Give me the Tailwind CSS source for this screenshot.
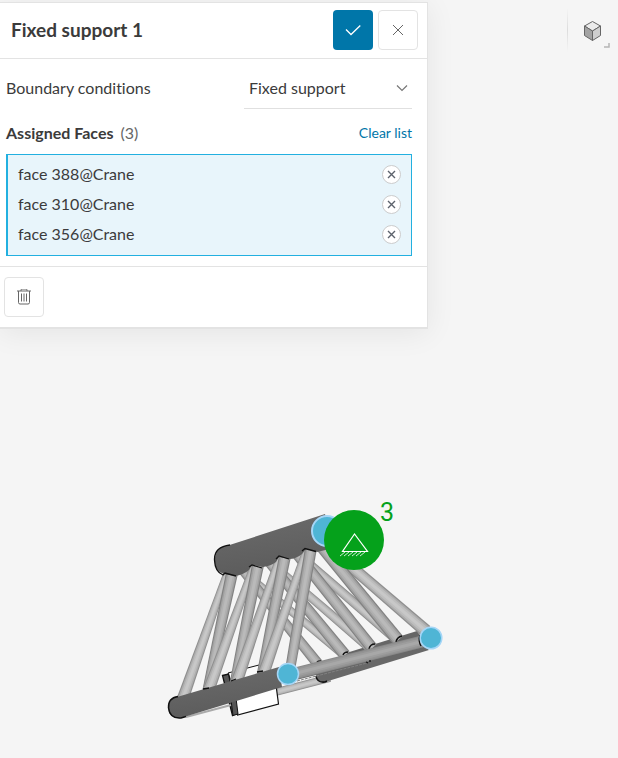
<!DOCTYPE html>
<html lang="en">
<head>
  <meta charset="UTF-8" />
  <meta name="viewport" content="width=device-width, initial-scale=1.0" />
  <title>Fixed support 1</title>
  <script src="https://cdn.jsdelivr.net/npm/@tailwindcss/browser@4"></script>
</head>
<body class="min-h-screen bg-[#f5f5f5] font-[Lato,sans-serif] text-base text-[#3b3b3b] [font-variant-ligatures:none]">

  <div class="flex items-start justify-between pt-0.5">

    <!-- Settings panel -->
    <form class="w-[428px] max-w-full border-t border-r border-b-2 border-[#e3e3e3] bg-white shadow-[0_4px_28px_rgba(0,0,0,0.07)]">
      <header class="flex items-center border-b border-[#e3e3e3] pt-[7px] pr-[9px] pb-2 pl-[11px]">
        <h1 class="flex-1 text-[19px] font-bold">Fixed support 1</h1>
        <button type="submit" aria-label="Apply" class="flex size-10 items-center justify-center rounded bg-[#0076a9] text-white">
          <svg class="size-4" viewBox="0 0 16 16" fill="none" stroke="currentColor" stroke-width="1.3"><path d="M1 7.5l5 5L15.300 3.500" /></svg>
        </button>
        <button type="button" aria-label="Close" class="ml-[5px] flex size-10 items-center justify-center rounded border border-[#e3e3e3] text-[#666]">
          <svg class="size-4" viewBox="0 0 16 16" fill="none" stroke="currentColor"><path d="M3 3l10 10M13 3L3 13" /></svg>
        </button>
      </header>

      <div class="pt-2.5 pr-[15px] pb-2.5 pl-1.5">
        <div class="flex items-start justify-between">
          <label for="bcType" class="leading-[38px]">Boundary conditions</label>
          <div class="relative w-[168px] border-b border-[#e0e0e0] pb-0.5">
            <select id="bcType" class="h-[37px] w-full appearance-none bg-transparent pr-8 pl-[5px]">
              <option>Fixed support</option>
            </select>
            <svg class="pointer-events-none absolute top-[13px] right-1 size-3" viewBox="0 0 12 12" fill="none" stroke="#777" stroke-width="1.2"><path d="M1 3.500l5 5 5-5" /></svg>
          </div>
        </div>

        <div class="flex h-[45px] items-center pt-0.5">
          <h2 class="font-bold">Assigned Faces</h2>
          <span class="ml-[7px] flex-1 text-[#666]">(3)</span>
          <button type="button" class="text-sm text-[#0076a9]">Clear list</button>
        </div>

        <ul class="border border-l-2 border-[#22b0e0] bg-[#e8f5fb] px-2.5 pt-1 pb-1.5">
          <li class="flex h-[30px] items-center justify-between">
            face 388@Crane
            <button type="button" aria-label="Remove face 388@Crane" class="flex size-[19px] items-center justify-center rounded-full border border-[#ccc] bg-white">
              <svg class="size-[9px]" viewBox="0 0 9 9" stroke="#5c626c" stroke-width="1.4"><path d="M1 1l7 7M8 1L1 8" /></svg>
            </button>
          </li>
          <li class="flex h-[30px] items-center justify-between">
            face 310@Crane
            <button type="button" aria-label="Remove face 310@Crane" class="flex size-[19px] items-center justify-center rounded-full border border-[#ccc] bg-white">
              <svg class="size-[9px]" viewBox="0 0 9 9" stroke="#5c626c" stroke-width="1.4"><path d="M1 1l7 7M8 1L1 8" /></svg>
            </button>
          </li>
          <li class="flex h-[30px] items-center justify-between">
            face 356@Crane
            <button type="button" aria-label="Remove face 356@Crane" class="flex size-[19px] items-center justify-center rounded-full border border-[#ccc] bg-white">
              <svg class="size-[9px]" viewBox="0 0 9 9" stroke="#5c626c" stroke-width="1.4"><path d="M1 1l7 7M8 1L1 8" /></svg>
            </button>
          </li>
        </ul>
      </div>

      <footer class="border-t border-[#e3e3e3] px-1 py-2.5">
        <button type="button" aria-label="Delete" class="flex size-10 items-center justify-center rounded border border-[#e3e3e3]">
          <svg class="size-4" viewBox="0 0 16 16" fill="none" stroke="#666"><path d="M1 2h14M5 2V1q0-1 1-1h4q1 0 1 1v1M2.500 2v11.500q0 1.500 1.500 1.500h8q1.500 0 1.500-1.500V2M5.500 4.500v8M8 4.500v8M10.500 4.500v8" /></svg>
        </button>
      </footer>
    </form>

    <!-- View toolbar -->
    <div class="flex pt-1.5">
      <div class="h-11 w-px bg-linear-to-b from-transparent via-[#dcdcdc] to-transparent"></div>
      <button type="button" aria-label="Display mode" class="mt-2 mr-2 ml-4 flex h-8 w-[26px] items-start">
        <svg class="h-8 w-[26px]" viewBox="0 0 26 32">
          <g stroke="#666" stroke-linejoin="round">
            <path d="M8.500 5.500l8 4.500-8 5-8-5z" fill="#ececec" />
            <path d="M0.500 10l8 5v9.500l-8-5z" fill="#a3a3a3" />
            <path d="M16.500 10l-8 5v9.500l8-5z" fill="#cfcfcf" />
          </g>
          <path d="M25 27v4h-5" fill="none" stroke="#b5b5b5" stroke-width="1.500" />
        </svg>
      </button>
    </div>
  </div>

  <!-- Model view -->
  <main class="mt-[161px] ml-[158px]">
    <svg id="model" class="h-[240px] w-[300px]" viewBox="158 490 300 240" role="img" aria-label="Crane model">
      <defs>
        <linearGradient id="chord" x1="0" y1="0" x2="0.25" y2="1">
          <stop offset="0.1" stop-color="#6a6a6a" />
          <stop offset="0.5" stop-color="#646464" />
          <stop offset="1" stop-color="#5c5c5c" />
        </linearGradient>
      </defs>
      <g id="back"></g>
      <g id="front"></g>
      <g>
        <circle cx="327" cy="531" r="15" fill="#4fb5d5" stroke="#a5d6f7" stroke-width="2" />
        <circle cx="288" cy="674" r="10.500" fill="#4fb5d5" stroke="#a5d6f7" stroke-width="1.500" />
        <circle cx="431" cy="638" r="10.800" fill="#4fb5d5" stroke="#a5d6f7" stroke-width="1.500" />
        <circle cx="354" cy="540" r="30" fill="#05a11b" />
        <path d="M354.500 534l-12 17.500h25z" fill="none" stroke="#fff" stroke-width="1.200" />
        <path d="M345 552l-5 4M349 552l-5 4M353 552l-5 4M357 552l-5 4M361 552l-5 4M365 552l-5 4" stroke="#fff" stroke-width="0.800" />
        <text x="380" y="521" font-size="25" fill="#05a11b" class="font-[Roboto,sans-serif]">3</text>
      </g>
    </svg>
  </main>

  <script>
    // x1, y1, x2, y2, start width, end width
    const backRods = [
      [245, 573, 343, 654, 7, 9],
      [243, 571, 318, 664, 9, 11],
      [272, 564, 370, 648, 8, 10],
      [269, 562, 345, 655, 10, 12],
      [300, 556, 396, 639, 9, 10],
      [297, 554, 372, 648, 11, 12],
      [326, 545, 426, 631, 11, 13],
      [321, 546, 398, 640, 12, 13],
    ];
    const frontRods = [
      [227, 573, 182, 701, 7, 12],
      [232, 573, 207, 690, 12, 9],
      [254, 565, 208, 692, 7, 12],
      [258, 565, 234, 684, 12, 9],
      [280, 556, 236, 684, 7, 12],
      [285, 556, 261, 676, 12, 9],
      [307, 548, 263, 675, 7, 12],
      [311, 548, 290, 670, 12, 10],
    ];
    const light = ['#8f8f8f', '#adadad', '#bebebe', '#c8c8c8'];
    const shade = ['#828282', '#a0a0a0', '#b0b0b0', '#bababa'];

    function rod([x1, y1, x2, y2, w1, w2], colors) {
      const len = Math.hypot(x2 - x1, y2 - y1);
      const nx = (y2 - y1) / len, ny = -(x2 - x1) / len;
      return [1, 0.8, 0.55, 0.25].map((k, i) => {
        const a = w1 * k / 2, b = w2 * k / 2;
        const pts = [[x1 + nx * a, y1 + ny * a], [x2 + nx * b, y2 + ny * b], [x2 - nx * b, y2 - ny * b], [x1 - nx * a, y1 - ny * a]];
        return `<polygon points="${pts.map(p => p.join()).join(' ')}" fill="${colors[i]}" />`;
      }).join('');
    }

    document.getElementById('back').innerHTML =
      // lower chord on the far side
      '<path d="M343 654L417 631L422 638L345 662Z" fill="#666" />' +
      backRods.map((r, i) => rod(r, i % 2 ? shade : light)).join('') +
      '<path d="M396 642q1-5 6-6M369 649q1-5 6-5M343 655q1-3 5-3M317 662q1-1 4-1" fill="none" stroke="#111" stroke-width="1.500" />' +
      rod([272, 693, 330, 678, 8, 8], light) +
      '<path d="M288 680L420 642L429 650L325 682Q317 683 316 675L288 682Z" fill="#686868" />' +
      '<path d="M316 676q1 7 9 6l2-1" fill="none" stroke="#111" stroke-width="1.500" />' +
      rod([285, 676, 424, 641, 12, 12], ['#8a8a8a', '#949494', '#9e9e9e', '#a8a8a8']) +
      '<path d="M420 635q-2 6 1 11M366 662l2 1M370 660v2" fill="none" stroke="#111" stroke-width="1.300" />' +
      '<path d="M297 681l70-18" stroke="#808080" stroke-dasharray="3 1" />';

    document.getElementById('front').innerHTML =
      // bracket
      '<path d="M228 673l31-8 5 18-30 6z" fill="#fafafa" stroke="#111" />' +
      '<path d="M222.500 675.500l6-1.500 9 39-5 2.500z" fill="#555" stroke="#111" stroke-width="1.300" />' +
      '<path d="M232 697l44-12 2.500 19-41 11z" fill="#fff" stroke="#111" stroke-width="1.200" />' +
      '<path d="M231 700l5-2 2 16-5 1.500z" fill="#555" stroke="#111" />' +
      frontRods.map((r, i) => rod(r, i % 2 ? shade : light)).join('') +
      // lower chord
      '<path d="M186 717l45-12" stroke="#aaa" stroke-width="2" />' +
      '<path d="M177 697L279 667L282 687L184 717Q169 721 168 708Q168 699 177 697Z" fill="url(#chord)" />' +
      '<path d="M178 696.500Q168 698 168.500 708Q170 719 181 718L186 716.500" fill="none" stroke="#111" stroke-width="1.500" />' +
      '<path d="M203 689l6-1M231 681l5-2M257 672l6-1" stroke="#111" stroke-width="1.300" />' +
      // top chord
      '<path d="M228 545.500L325 514L334 548L317 552L306 549L302 554Q296 559 289 559L279 557L276 562Q271 566 263 567L252 565L249 570Q243 575 235 576L224 574Q214 571 214.500 560Q216 547 228 545.500Z" fill="url(#chord)" />' +
      '<path d="M230 545Q214 547 214.500 560Q215 572 223 575L225 573L236 576M249 567l3-2 10 3M276 559l3-3 10 3M302 551l3-2.500 11 3" fill="none" stroke="#111" stroke-width="1.300" />';
  </script>
</body>
</html>
